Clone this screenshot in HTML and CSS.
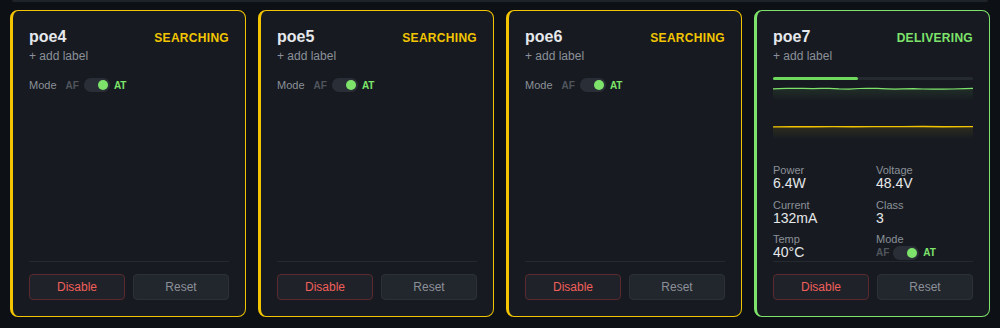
FILE: index.html
```html
<!DOCTYPE html>
<html>
<head>
<meta charset="utf-8">
<link rel="stylesheet" href="styles.css">
</head>
<body>
<div class="topstrip"></div>
<div class="grid">
  <div class="card searching">
    <div class="head"><span class="name">poe4</span><span class="status">SEARCHING</span></div>
    <div class="addlabel">+ add label</div>
    <div class="moderow"><span class="modelbl">Mode</span><span class="af">AF</span><span class="toggle"><span class="knob"></span></span><span class="at">AT</span></div>
    <div class="foot"><button class="btn dis">Disable</button><button class="btn rst">Reset</button></div>
  </div>
  <div class="card searching">
    <div class="head"><span class="name">poe5</span><span class="status">SEARCHING</span></div>
    <div class="addlabel">+ add label</div>
    <div class="moderow"><span class="modelbl">Mode</span><span class="af">AF</span><span class="toggle"><span class="knob"></span></span><span class="at">AT</span></div>
    <div class="foot"><button class="btn dis">Disable</button><button class="btn rst">Reset</button></div>
  </div>
  <div class="card searching">
    <div class="head"><span class="name">poe6</span><span class="status">SEARCHING</span></div>
    <div class="addlabel">+ add label</div>
    <div class="moderow"><span class="modelbl">Mode</span><span class="af">AF</span><span class="toggle"><span class="knob"></span></span><span class="at">AT</span></div>
    <div class="foot"><button class="btn dis">Disable</button><button class="btn rst">Reset</button></div>
  </div>
  <div class="card delivering">
    <div class="head"><span class="name">poe7</span><span class="status">DELIVERING</span></div>
    <div class="addlabel">+ add label</div>
    <div class="bar"><div class="fill" style="width:42.5%"></div></div>
    <svg class="chart" viewBox="0 0 200 72" width="200" height="72">
      <defs>
        <linearGradient id="gg" x1="0" y1="0" x2="0" y2="1">
          <stop offset="0" stop-color="#7ee36b" stop-opacity="0.10"/>
          <stop offset="1" stop-color="#7ee36b" stop-opacity="0"/>
        </linearGradient>
        <linearGradient id="gy" x1="0" y1="0" x2="0" y2="1">
          <stop offset="0" stop-color="#f2c500" stop-opacity="0.10"/>
          <stop offset="1" stop-color="#f2c500" stop-opacity="0"/>
        </linearGradient>
      </defs>
      <rect x="0" y="4.5" width="200" height="12" fill="url(#gg)"/>
      <rect x="0" y="43" width="200" height="12" fill="url(#gy)"/>
      <polyline fill="none" stroke="#7ee36b" stroke-width="1.2" points="0,4.8 6,4.6 14,4.3 30,4.3 40,4.6 48,4.3 56,4.4 66,4.9 76,5.1 86,4.5 94,4.3 104,4.4 114,4.9 122,5.2 130,4.9 140,4.6 150,5.0 160,5.1 170,5.1 180,5.0 192,4.6 200,4.3"/>
      <polyline fill="none" stroke="#f2c500" stroke-width="1.4" points="0,42.9 20,42.7 40,42.8 60,42.6 80,42.8 100,42.6 130,42.6 150,42.5 170,42.7 200,42.6"/>
    </svg>
    <div class="stats">
      <div class="stat"><div class="sl">Power</div><div class="sv">6.4W</div></div>
      <div class="stat"><div class="sl">Voltage</div><div class="sv">48.4V</div></div>
      <div class="stat"><div class="sl">Current</div><div class="sv">132mA</div></div>
      <div class="stat"><div class="sl">Class</div><div class="sv">3</div></div>
      <div class="stat"><div class="sl">Temp</div><div class="sv">40°C</div></div>
      <div class="stat"><div class="sl">Mode</div><div class="smode"><span class="af">AF</span><span class="toggle"><span class="knob"></span></span><span class="at">AT</span></div></div>
    </div>
    <div class="foot"><button class="btn dis">Disable</button><button class="btn rst">Reset</button></div>
  </div>
</div>
</body>
</html>
```
FILE: styles.css
```css
* { box-sizing: border-box; }
html, body { margin: 0; padding: 0; }
body {
  background: #0d1015;
  font-family: "Liberation Sans", Arial, sans-serif;
  width: 1000px;
  height: 328px;
  overflow: hidden;
}
.topstrip {
  height: 2px;
  margin: 0 12px;
  background: #1e2229;
  border-radius: 0 0 4px 4px;
}
.grid {
  display: grid;
  grid-template-columns: repeat(4, 236px);
  gap: 12px;
  padding: 8px 10px 0 10px;
}
.card {
  height: 307px;
  background: #171b21;
  border: 1px solid;
  border-left-width: 3px;
  border-radius: 8px;
  padding: 16px;
  display: flex;
  flex-direction: column;
}
.card.searching { border-color: #f2c500; }
.card.delivering { border-color: #7ee36b; }
.head {
  display: flex;
  justify-content: space-between;
  align-items: baseline;
  height: 20px;
}
.name {
  font-size: 16px;
  font-weight: 700;
  color: #e6e8eb;
  line-height: 20px;
}
.status {
  font-size: 12px;
  font-weight: 700;
  letter-spacing: 0.3px;
}
.searching .status { color: #f2c500; }
.delivering .status { color: #7ee36b; }
.addlabel {
  font-size: 12px;
  line-height: 16px;
  margin-top: 1px;
  color: #8b9098;
}
.moderow {
  display: flex;
  align-items: center;
  margin-top: 13px;
  height: 16px;
  font-size: 11px;
}
.modelbl { color: #8b9098; margin-right: 9px; }
.af { color: #50555d; font-weight: 700; font-size: 10px; margin-right: 5px; }
.at { color: #7ee36b; font-weight: 700; font-size: 10px; margin-left: 4px; }
.smode .af { margin-right: 4px; }
.toggle {
  width: 26px;
  height: 14px;
  border-radius: 7px;
  background: #2a2f37;
  display: flex;
  align-items: center;
  justify-content: flex-end;
  padding-right: 2px;
}
.knob {
  width: 10px;
  height: 10px;
  border-radius: 50%;
  background: #7ee36b;
}
.bar {
  margin-top: 13px;
  height: 3px;
  background: #252a31;
  border-radius: 2px;
}
.fill {
  height: 3px;
  background: #6fd95d;
  border-radius: 2px;
}
.chart {
  display: block;
  margin-top: 4px;
}
.stats {
  display: grid;
  grid-template-columns: 1fr 1fr;
  column-gap: 6px;
  row-gap: 7.5px;
  margin-top: 8px;
}
.sl {
  font-size: 11px;
  line-height: 12px;
  color: #8b9098;
}
.sv {
  font-size: 14px;
  line-height: 15px;
  color: #e6e8eb;
}
.smode {
  display: flex;
  align-items: center;
  height: 15px;
}
.foot {
  margin-top: auto;
  border-top: 1px solid #252a31;
  padding-top: 12px;
  display: grid;
  grid-template-columns: 1fr 1fr;
  gap: 8px;
}
.btn {
  height: 26px;
  border-radius: 4px;
  font-family: inherit;
  font-size: 12px;
  background: #22262d;
  border: 1px solid #2c3037;
  padding: 0;
}
.btn.dis { color: #ef5f5c; border-color: #5a2a2e; background: #1f2228; }
.btn.rst { color: #8b9098; }
```
